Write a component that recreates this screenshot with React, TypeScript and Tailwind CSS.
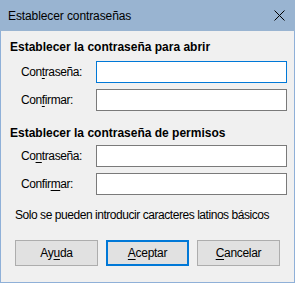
import React from 'react';

const font = { fontFamily: '"Segoe UI", "Liberation Sans", Arial, sans-serif' };

function Label({ pre, u, post }: { pre: string; u: string; post: string }) {
  return (
    <span className="w-[75px] text-[12px] leading-[16px] tracking-[-0.4px] text-black">
      {pre}
      <span className="underline underline-offset-[2px]">{u}</span>
      {post}
    </span>
  );
}

function Row({ pre, u, post, focused }: { pre: string; u: string; post: string; focused?: boolean }) {
  return (
    <div className="flex items-center pl-[20px] h-[22px]">
      <Label pre={pre} u={u} post={post} />
      <div
        className={
          'w-[191px] h-[22px] bg-white border ' +
          (focused ? 'border-[#0078d7]' : 'border-[#7a7a7a]')
        }
      />
    </div>
  );
}

function Button({ pre, u, post, primary }: { pre: string; u: string; post: string; primary?: boolean }) {
  return (
    <div
      className={
        'w-[83px] h-[26px] bg-[#e1e1e1] flex items-center justify-center text-[12px] tracking-[-0.3px] text-black ' +
        (primary ? 'border-2 border-[#0078d7]' : 'border border-[#adadad]')
      }
    >
      <span>
        {pre}
        <span className="underline underline-offset-[2px]">{u}</span>
        {post}
      </span>
    </div>
  );
}

export default function App() {
  return (
    <div style={font} className="w-[295px] h-[283px] flex flex-col bg-[#f0f0f0] border-x border-b border-[#8fb0d8]">
      {/* Title bar */}
      <div className="h-[31px] bg-[#99b4d1] flex items-center justify-between pl-[8px] pr-[10px] shrink-0 -mx-px">
        <span className="text-[12px] tracking-[-0.1px] text-black">Establecer contraseñas</span>
        <svg width="11" height="11" viewBox="0 0 11 11">
          <path d="M0.5 0.5 L10.5 10.5 M10.5 0.5 L0.5 10.5" stroke="#000" strokeWidth="1" />
        </svg>
      </div>

      {/* Open password */}
      <div className="mt-[8px] pl-[9px] h-[16px] leading-[16px] text-[12px] font-bold text-black">
        Establecer la contraseña para abrir
      </div>
      <div className="mt-[6px] flex flex-col gap-[6px]">
        <Row pre="Con" u="t" post="raseña:" focused />
        <Row pre="Con" u="f" post="irmar:" />
      </div>

      {/* Permissions password */}
      <div className="mt-[14px] pl-[9px] h-[16px] leading-[16px] text-[12px] font-bold text-black">
        Establecer la contraseña de permisos
      </div>
      <div className="mt-[4px] flex flex-col gap-[6px]">
        <Row pre="Co" u="n" post="traseña:" />
        <Row pre="Confir" u="m" post="ar:" />
      </div>

      <div className="mt-[12px] pl-[14px] h-[16px] leading-[16px] text-[12px] tracking-[-0.45px] text-black">
        Solo se pueden introducir caracteres latinos básicos
      </div>

      {/* Buttons */}
      <div className="mt-[17px] pl-[14px] flex gap-[8px]">
        <Button pre="Ay" u="u" post="da" />
        <Button pre="" u="A" post="ceptar" primary />
        <Button pre="" u="C" post="ancelar" />
      </div>
    </div>
  );
}
